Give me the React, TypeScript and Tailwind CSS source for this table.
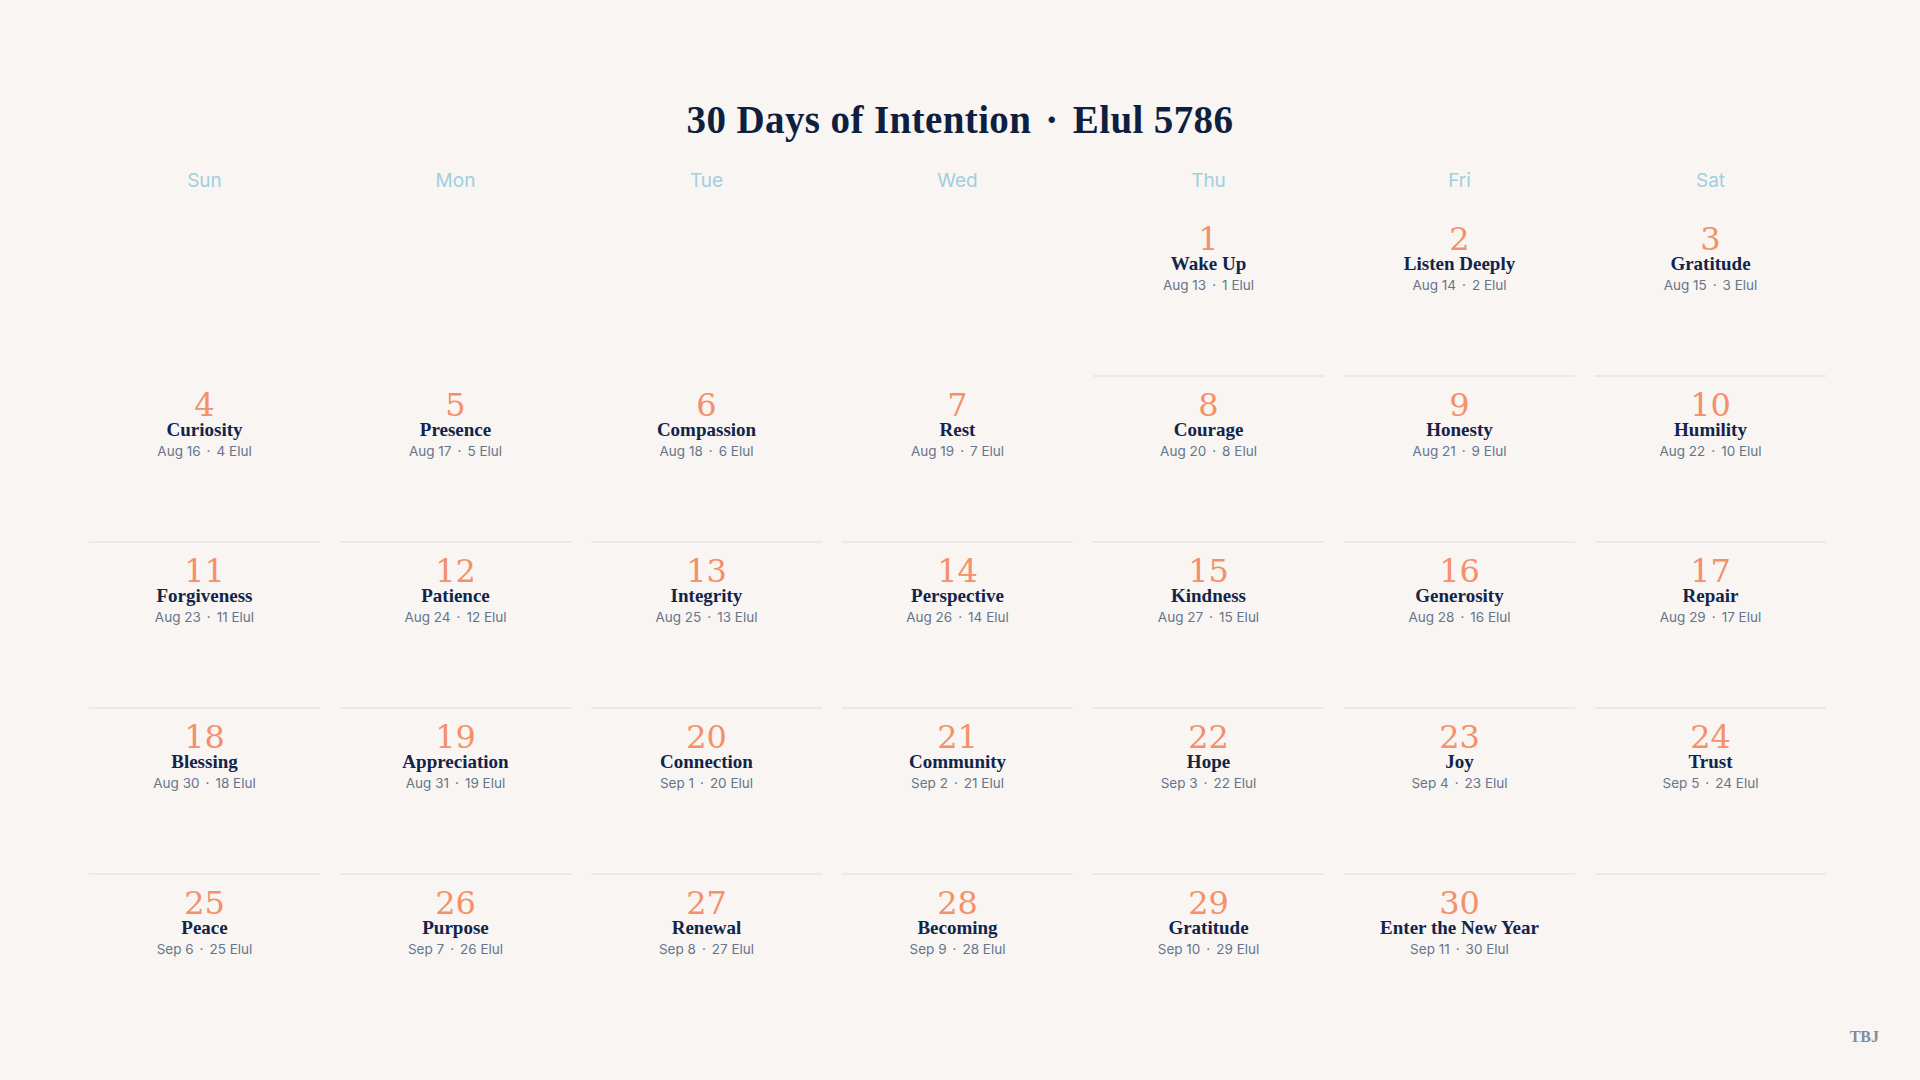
import React from "react";

// Elul 5786 – one word per day, starting Thursday Aug 13
const WORDS = [
  "Wake Up", "Listen Deeply", "Gratitude", "Curiosity", "Presence", "Compassion", "Rest",
  "Courage", "Honesty", "Humility", "Forgiveness", "Patience", "Integrity", "Perspective",
  "Kindness", "Generosity", "Repair", "Blessing", "Appreciation", "Connection", "Community",
  "Hope", "Joy", "Trust", "Peace", "Purpose", "Renewal", "Becoming", "Gratitude",
  "Enter the New Year",
];

const WEEKDAYS = ["Sun", "Mon", "Tue", "Wed", "Thu", "Fri", "Sat"];
const LEAD = 4; // day 1 falls on Thursday

function gregorian(day: number) {
  const n = 12 + day; // Aug 13 is day 1
  return n <= 31 ? `Aug ${n}` : `Sep ${n - 31}`;
}

function DayCell({ day }: { day: number | null }) {
  if (day === null) return <div className="h-[166px]" />;
  const hasRule = day <= 24;
  return (
    <div
      className={`h-[166px] flex flex-col items-center pt-[15px] ${
        hasRule ? "border-b-2 border-[#e7eaec]" : ""
      }`}
    >
      <div className="font-['DejaVu_Serif',serif] text-[32px] leading-[26px] text-[#f4906a]">
        {day}
      </div>
      <div className="mt-[2px] font-['Liberation_Serif',serif] font-bold text-[19px] leading-[19px] text-[#11244a]">
        {WORDS[day - 1]}
      </div>
      <div className="mt-[6px] font-['Inter',sans-serif] text-[13.5px] leading-none text-[#66758c]">
        <span>{gregorian(day)}</span>
        <span className="mx-[6px]">·</span>
        <span>{day} Elul</span>
      </div>
    </div>
  );
}

export default function App() {
  const cells: (number | null)[] = [];
  for (let i = 0; i < LEAD; i++) cells.push(null);
  for (let d = 1; d <= 30; d++) cells.push(d);
  while (cells.length % 7 !== 0) cells.push(null);

  return (
    <div className="relative min-h-screen w-full bg-[#f8f5f2] pt-[101px]">
      <h1 className="text-center font-['Liberation_Serif',serif] font-bold text-[39px] leading-[38px] tracking-[0.01em] text-[#0e1f40]">
        30 Days of Intention
        <span className="mx-[14px]">·</span>
        Elul 5786
      </h1>

      <div className="ml-[89px] mt-[32px] w-[1737px]">
        <div className="grid grid-cols-7 gap-x-[20px]">
          {WEEKDAYS.map((w) => (
            <div
              key={w}
              className="text-center font-['Inter',sans-serif] text-[19px] leading-[19px] text-[#9fcfe1]"
            >
              {w}
            </div>
          ))}
        </div>

        <div className="mt-[21px] grid grid-cols-7 gap-x-[20px]">
          {cells.map((d, i) => (
            <DayCell key={i} day={d} />
          ))}
        </div>
      </div>

      <div className="absolute right-[41px] bottom-[35px] font-['Liberation_Serif',serif] font-bold text-[16px] leading-none text-[#7e8ca2]">
        TBJ
      </div>
    </div>
  );
}
